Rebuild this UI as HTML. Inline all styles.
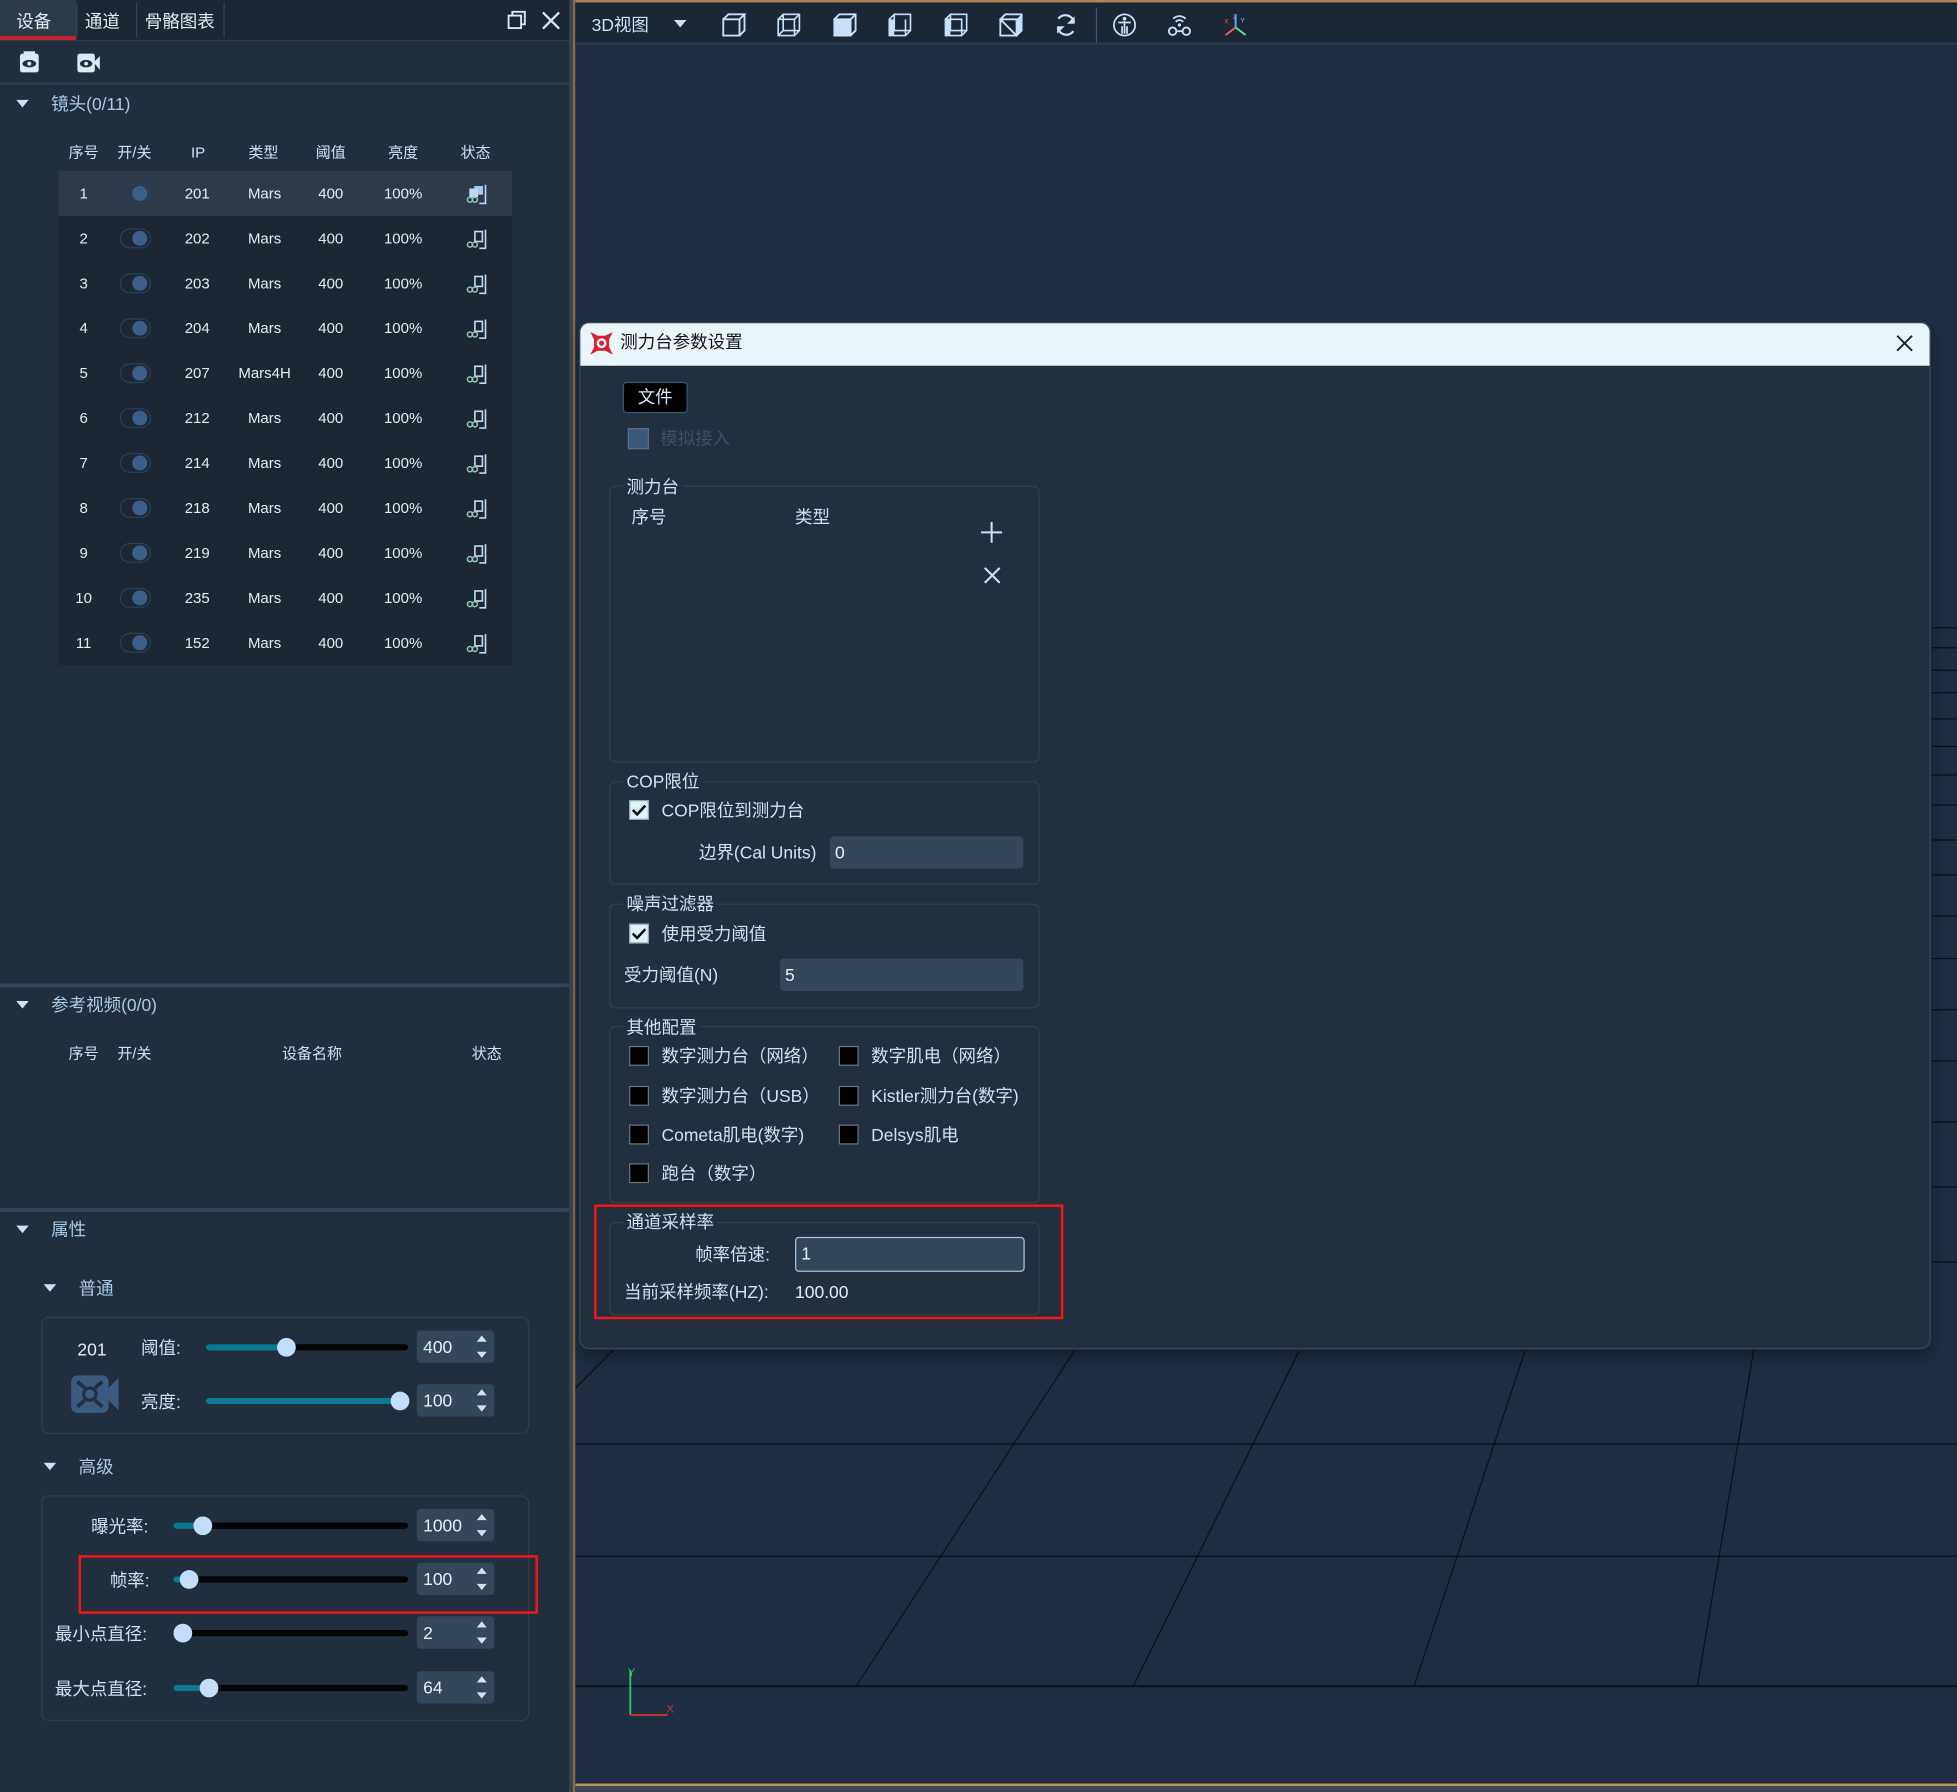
<!DOCTYPE html>
<html><head><meta charset="utf-8">
<style>
*{margin:0;padding:0;box-sizing:border-box}
html,body{width:1957px;height:1792px;overflow:hidden;background:#1e2d3e}
#root{position:absolute;left:0;top:0;width:1568px;height:1436px;transform:scale(1.2481);transform-origin:0 0;font-family:"Liberation Sans","Noto Sans CJK SC",sans-serif;color:#cfe2f4}
.a{position:absolute;white-space:nowrap}
.t12{font-size:12px;line-height:14px}
.t13{font-size:13px;line-height:16px}
.t14{font-size:14px;line-height:18px}
.tri{position:absolute;width:0;height:0;border-left:5px solid transparent;border-right:5px solid transparent;border-top:6px solid #cfe2f4}
.row{position:absolute;left:47px;width:363px;height:36px;background:#1c2733}
.row span{position:absolute;top:11px;font-size:12px;line-height:14px;color:#e4edf6;transform:translateX(-50%)}
.tg{position:absolute;left:49px;top:10px;width:25px;height:16px;border:1px solid #26415c;border-radius:8px}
.tg:after{content:"";position:absolute;right:2px;top:1px;width:12px;height:12px;border-radius:50%;background:#3b5f88}
.st{position:absolute;left:326px;top:10px}
.box{position:absolute;border:1.5px solid #2f3e4e;border-radius:6px}
.trk{position:absolute;height:5px;background:#050505;border-radius:3px}
.fill{position:absolute;left:0;top:0;height:5px;background:#0a7a92;border-radius:3px}
.knob{position:absolute;top:-5px;width:15px;height:15px;border-radius:50%;background:#c3defa}
.spin{position:absolute;width:62px;height:26px;background:#33465a;border-radius:3px;font-size:14px;line-height:26px;padding-left:5px;color:#e8f0f8}
.spin:before{content:"";position:absolute;right:6px;top:4px;border-left:4px solid transparent;border-right:4px solid transparent;border-bottom:5px solid #cfe2f4}
.spin:after{content:"";position:absolute;right:6px;bottom:4px;border-left:4px solid transparent;border-right:4px solid transparent;border-top:5px solid #cfe2f4}
.grp{position:absolute;border:1.5px solid #33404f;border-radius:5px}
.gt{position:absolute;background:#222f3e;padding:0 3px;font-size:14px;line-height:18px;color:#cfe2f4}
.cb{position:absolute;width:16px;height:16px;background:#000;border:1.5px solid #6a7684}
.cbk{position:absolute;width:16px;height:16px;background:#e2f0fc;border:1px solid #8aa}
.inp{position:absolute;background:#33465a;border-radius:3px;font-size:14px;line-height:26px;padding-left:4px;color:#e8f0f8}
.tb{position:absolute;top:10px}
</style></head><body><div id="root">

<!-- LEFT PANEL -->
<div class="a" style="left:0;top:0;width:458px;height:1436px;background:#212e3d"></div>
<div class="a" style="left:0;top:0;width:458px;height:33px;background:#1c2734;border-bottom:1.5px solid #2e3d4d"></div>
<div class="a" style="left:0;top:0;width:61px;height:32px;background:#2d3a4a"></div>
<div class="a" style="left:0;top:29px;width:61px;height:3px;background:#c8232b"></div>
<div class="a" style="left:61px;top:2px;width:1px;height:28px;background:#34445a"></div>
<div class="a" style="left:109px;top:2px;width:1px;height:28px;background:#34445a"></div>
<div class="a" style="left:179px;top:2px;width:1px;height:28px;background:#34445a"></div>
<div class="a t14" style="left:13px;top:8px;color:#e2ecf6">设备</div>
<div class="a t14" style="left:68px;top:8px;color:#e2ecf6">通道</div>
<div class="a t14" style="left:116px;top:8px;color:#e2ecf6">骨骼图表</div>
<svg class="a" style="left:406px;top:8px" width="16" height="16"><rect x="1.5" y="4.5" width="10" height="10" fill="none" stroke="#d8e8f6" stroke-width="1.5"/><path d="M4.5 4.5V1.5H14.5V11.5H11.5" fill="none" stroke="#d8e8f6" stroke-width="1.5"/></svg>
<svg class="a" style="left:434px;top:9px" width="15" height="15"><path d="M1 1L14 14M14 1L1 14" stroke="#d8e8f6" stroke-width="1.8"/></svg>
<div class="a" style="left:0;top:66px;width:458px;height:2px;background:#2e3d4d"></div>
<svg class="a" style="left:15px;top:41px" width="17" height="18"><rect x="1" y="2" width="15" height="15" rx="2" fill="#dbe8f5"/><rect x="4" y="0" width="9" height="3" fill="#dbe8f5"/><ellipse cx="8.5" cy="10" rx="5.5" ry="3" fill="#213040"/><circle cx="8.5" cy="10" r="1.6" fill="#dbe8f5"/></svg>
<svg class="a" style="left:61px;top:41px" width="20" height="18"><rect x="1" y="2" width="14" height="15" rx="2" fill="#dbe8f5"/><path d="M14 9L19 4V15Z" fill="#dbe8f5"/><ellipse cx="8" cy="10" rx="5" ry="3" fill="#213040"/><circle cx="8" cy="10" r="1.5" fill="#dbe8f5"/></svg>

<div class="tri" style="left:13px;top:80px"></div>
<div class="a t14" style="left:41px;top:74px;color:#a9cbe8">镜头(0/11)</div>
<div class="a t12" style="left:55px;top:115px">序号</div>
<div class="a t12" style="left:94px;top:115px">开/关</div>
<div class="a t12" style="left:153px;top:115px">IP</div>
<div class="a t12" style="left:199px;top:115px">类型</div>
<div class="a t12" style="left:253px;top:115px">阈值</div>
<div class="a t12" style="left:311px;top:115px">亮度</div>
<div class="a t12" style="left:369px;top:115px">状态</div>

<div class="row" style="top:137px;background:#2e3a4a"><span style="left:20px">1</span><div class="tg"></div><span style="left:111px">201</span><span style="left:165px">Mars</span><span style="left:218px">400</span><span style="left:276px">100%</span><svg class="st" width="19" height="17"><rect x="7" y="2" width="7" height="7" fill="#a8c8ec"/><rect x="3" y="4" width="7" height="7" fill="#c0d8f4"/><path d="M16 1V16H11" fill="none" stroke="#c0d8f4" stroke-width="1.3"/><circle cx="3.5" cy="13" r="2" fill="none" stroke="#8fc8b8" stroke-width="1.2"/><circle cx="7.5" cy="13" r="2" fill="none" stroke="#8fc8b8" stroke-width="1.2"/></svg></div>
<div class="row" style="top:173px"><span style="left:20px">2</span><div class="tg"></div><span style="left:111px">202</span><span style="left:165px">Mars</span><span style="left:218px">400</span><span style="left:276px">100%</span><svg class="st" width="19" height="17"><rect x="7.5" y="2.5" width="6" height="8" fill="none" stroke="#c0d8f4" stroke-width="1.3"/><path d="M16 1V16H11" fill="none" stroke="#c0d8f4" stroke-width="1.3"/><circle cx="3.5" cy="13" r="2" fill="none" stroke="#8fc8b8" stroke-width="1.2"/><circle cx="7.5" cy="13" r="2" fill="none" stroke="#8fc8b8" stroke-width="1.2"/></svg></div>
<div class="row" style="top:209px"><span style="left:20px">3</span><div class="tg"></div><span style="left:111px">203</span><span style="left:165px">Mars</span><span style="left:218px">400</span><span style="left:276px">100%</span><svg class="st" width="19" height="17"><rect x="7.5" y="2.5" width="6" height="8" fill="none" stroke="#c0d8f4" stroke-width="1.3"/><path d="M16 1V16H11" fill="none" stroke="#c0d8f4" stroke-width="1.3"/><circle cx="3.5" cy="13" r="2" fill="none" stroke="#8fc8b8" stroke-width="1.2"/><circle cx="7.5" cy="13" r="2" fill="none" stroke="#8fc8b8" stroke-width="1.2"/></svg></div>
<div class="row" style="top:245px"><span style="left:20px">4</span><div class="tg"></div><span style="left:111px">204</span><span style="left:165px">Mars</span><span style="left:218px">400</span><span style="left:276px">100%</span><svg class="st" width="19" height="17"><rect x="7.5" y="2.5" width="6" height="8" fill="none" stroke="#c0d8f4" stroke-width="1.3"/><path d="M16 1V16H11" fill="none" stroke="#c0d8f4" stroke-width="1.3"/><circle cx="3.5" cy="13" r="2" fill="none" stroke="#8fc8b8" stroke-width="1.2"/><circle cx="7.5" cy="13" r="2" fill="none" stroke="#8fc8b8" stroke-width="1.2"/></svg></div>
<div class="row" style="top:281px"><span style="left:20px">5</span><div class="tg"></div><span style="left:111px">207</span><span style="left:165px">Mars4H</span><span style="left:218px">400</span><span style="left:276px">100%</span><svg class="st" width="19" height="17"><rect x="7.5" y="2.5" width="6" height="8" fill="none" stroke="#c0d8f4" stroke-width="1.3"/><path d="M16 1V16H11" fill="none" stroke="#c0d8f4" stroke-width="1.3"/><circle cx="3.5" cy="13" r="2" fill="none" stroke="#8fc8b8" stroke-width="1.2"/><circle cx="7.5" cy="13" r="2" fill="none" stroke="#8fc8b8" stroke-width="1.2"/></svg></div>
<div class="row" style="top:317px"><span style="left:20px">6</span><div class="tg"></div><span style="left:111px">212</span><span style="left:165px">Mars</span><span style="left:218px">400</span><span style="left:276px">100%</span><svg class="st" width="19" height="17"><rect x="7.5" y="2.5" width="6" height="8" fill="none" stroke="#c0d8f4" stroke-width="1.3"/><path d="M16 1V16H11" fill="none" stroke="#c0d8f4" stroke-width="1.3"/><circle cx="3.5" cy="13" r="2" fill="none" stroke="#8fc8b8" stroke-width="1.2"/><circle cx="7.5" cy="13" r="2" fill="none" stroke="#8fc8b8" stroke-width="1.2"/></svg></div>
<div class="row" style="top:353px"><span style="left:20px">7</span><div class="tg"></div><span style="left:111px">214</span><span style="left:165px">Mars</span><span style="left:218px">400</span><span style="left:276px">100%</span><svg class="st" width="19" height="17"><rect x="7.5" y="2.5" width="6" height="8" fill="none" stroke="#c0d8f4" stroke-width="1.3"/><path d="M16 1V16H11" fill="none" stroke="#c0d8f4" stroke-width="1.3"/><circle cx="3.5" cy="13" r="2" fill="none" stroke="#8fc8b8" stroke-width="1.2"/><circle cx="7.5" cy="13" r="2" fill="none" stroke="#8fc8b8" stroke-width="1.2"/></svg></div>
<div class="row" style="top:389px"><span style="left:20px">8</span><div class="tg"></div><span style="left:111px">218</span><span style="left:165px">Mars</span><span style="left:218px">400</span><span style="left:276px">100%</span><svg class="st" width="19" height="17"><rect x="7.5" y="2.5" width="6" height="8" fill="none" stroke="#c0d8f4" stroke-width="1.3"/><path d="M16 1V16H11" fill="none" stroke="#c0d8f4" stroke-width="1.3"/><circle cx="3.5" cy="13" r="2" fill="none" stroke="#8fc8b8" stroke-width="1.2"/><circle cx="7.5" cy="13" r="2" fill="none" stroke="#8fc8b8" stroke-width="1.2"/></svg></div>
<div class="row" style="top:425px"><span style="left:20px">9</span><div class="tg"></div><span style="left:111px">219</span><span style="left:165px">Mars</span><span style="left:218px">400</span><span style="left:276px">100%</span><svg class="st" width="19" height="17"><rect x="7.5" y="2.5" width="6" height="8" fill="none" stroke="#c0d8f4" stroke-width="1.3"/><path d="M16 1V16H11" fill="none" stroke="#c0d8f4" stroke-width="1.3"/><circle cx="3.5" cy="13" r="2" fill="none" stroke="#8fc8b8" stroke-width="1.2"/><circle cx="7.5" cy="13" r="2" fill="none" stroke="#8fc8b8" stroke-width="1.2"/></svg></div>
<div class="row" style="top:461px"><span style="left:20px">10</span><div class="tg"></div><span style="left:111px">235</span><span style="left:165px">Mars</span><span style="left:218px">400</span><span style="left:276px">100%</span><svg class="st" width="19" height="17"><rect x="7.5" y="2.5" width="6" height="8" fill="none" stroke="#c0d8f4" stroke-width="1.3"/><path d="M16 1V16H11" fill="none" stroke="#c0d8f4" stroke-width="1.3"/><circle cx="3.5" cy="13" r="2" fill="none" stroke="#8fc8b8" stroke-width="1.2"/><circle cx="7.5" cy="13" r="2" fill="none" stroke="#8fc8b8" stroke-width="1.2"/></svg></div>
<div class="row" style="top:497px"><span style="left:20px">11</span><div class="tg"></div><span style="left:111px">152</span><span style="left:165px">Mars</span><span style="left:218px">400</span><span style="left:276px">100%</span><svg class="st" width="19" height="17"><rect x="7.5" y="2.5" width="6" height="8" fill="none" stroke="#c0d8f4" stroke-width="1.3"/><path d="M16 1V16H11" fill="none" stroke="#c0d8f4" stroke-width="1.3"/><circle cx="3.5" cy="13" r="2" fill="none" stroke="#8fc8b8" stroke-width="1.2"/><circle cx="7.5" cy="13" r="2" fill="none" stroke="#8fc8b8" stroke-width="1.2"/></svg></div>

<div class="a" style="left:0;top:788px;width:458px;height:3px;background:#34465a"></div>
<div class="tri" style="left:13px;top:802px"></div>
<div class="a t14" style="left:41px;top:796px;color:#a9cbe8">参考视频(0/0)</div>
<div class="a t12" style="left:55px;top:837px">序号</div>
<div class="a t12" style="left:94px;top:837px">开/关</div>
<div class="a t12" style="left:226px;top:837px">设备名称</div>
<div class="a t12" style="left:378px;top:837px">状态</div>

<div class="a" style="left:0;top:968px;width:458px;height:3px;background:#34465a"></div>
<div class="tri" style="left:13px;top:982px"></div>
<div class="a t14" style="left:41px;top:976px;color:#a9cbe8">属性</div>
<div class="tri" style="left:35px;top:1029px"></div>
<div class="a t14" style="left:63px;top:1023px;color:#a9cbe8">普通</div>
<div class="box" style="left:33px;top:1055px;width:391px;height:94px"></div>
<div class="a t14" style="left:62px;top:1072px;color:#e4edf6">201</div>
<svg class="a" style="left:56px;top:1100px" width="40" height="34"><rect x="1" y="2" width="30" height="30" rx="5" fill="#3b5c80"/><path d="M31 12L39 4V30L31 22Z" fill="#3b5c80"/><path d="M6 7L12 12M26 7L20 12M6 27L12 22M26 27L20 22" stroke="#213040" stroke-width="3"/><circle cx="16" cy="17" r="5" fill="none" stroke="#213040" stroke-width="2.5"/></svg>
<div class="a t14" style="left:113px;top:1071px">阈值:</div>
<div class="trk" style="left:165px;top:1077px;width:162px"><div class="fill" style="width:64px"></div><div class="knob" style="left:57px"></div></div>
<div class="spin" style="left:334px;top:1066px">400</div>
<div class="a t14" style="left:113px;top:1114px">亮度:</div>
<div class="trk" style="left:165px;top:1120px;width:162px"><div class="fill" style="width:158px"></div><div class="knob" style="left:148px"></div></div>
<div class="spin" style="left:334px;top:1109px">100</div>

<div class="tri" style="left:35px;top:1172px"></div>
<div class="a t14" style="left:63px;top:1166px;color:#a9cbe8">高级</div>
<div class="box" style="left:33px;top:1198px;width:391px;height:181px"></div>
<div class="a t14" style="left:73px;top:1214px">曝光率:</div>
<div class="trk" style="left:139px;top:1220px;width:188px"><div class="fill" style="width:24px"></div><div class="knob" style="left:16px"></div></div>
<div class="spin" style="left:334px;top:1209px">1000</div>
<div class="a t14" style="left:88px;top:1257px">帧率:</div>
<div class="trk" style="left:139px;top:1263px;width:188px"><div class="fill" style="width:12px"></div><div class="knob" style="left:5px"></div></div>
<div class="spin" style="left:334px;top:1252px">100</div>
<div class="a" style="left:63px;top:1246px;width:368px;height:47px;border:2.5px solid #f0161a"></div>
<div class="a t14" style="left:44px;top:1300px">最小点直径:</div>
<div class="trk" style="left:139px;top:1306px;width:188px"><div class="knob" style="left:0px"></div></div>
<div class="spin" style="left:334px;top:1295px">2</div>
<div class="a t14" style="left:44px;top:1344px">最大点直径:</div>
<div class="trk" style="left:139px;top:1350px;width:188px"><div class="fill" style="width:30px"></div><div class="knob" style="left:21px"></div></div>
<div class="spin" style="left:334px;top:1339px">64</div>

<div class="a" style="left:456px;top:0;width:3px;height:1436px;background:#394655"></div>
<div class="a" style="left:459px;top:0;width:2px;height:1436px;background:#8c6a48"></div>

<!-- VIEWPORT -->
<div class="a" style="left:461px;top:0;width:1107px;height:1436px;background:#1e2f44"></div>
<div class="a" style="left:461px;top:0;width:1107px;height:2px;background:#b08458"></div>
<div class="a" style="left:461px;top:1429px;width:1107px;height:2px;background:#c0905c"></div>
<div class="a" style="left:461px;top:1431px;width:1107px;height:5px;background:#3a4656"></div>
<div class="a" style="left:461px;top:2px;width:1107px;height:34px;background:#1b2735;border-bottom:2px solid #2a3a4c"></div>
<div class="a t14" style="left:474px;top:11px;color:#cfe2f4">3D视图</div>
<div class="tri" style="left:540px;top:16px"></div>
<svg class="tb" style="left:578px" width="20" height="20"><path d="M1.5 5.5H14.5V18.5H1.5Z M1.5 5.5L5.5 1.5H18.5L14.5 5.5 M18.5 1.5V14.5L14.5 18.5" fill="none" stroke="#c8e0f8" stroke-width="1.5"/></svg>
<svg class="tb" style="left:622px" width="20" height="20"><path d="M1.5 5.5H14.5V18.5H1.5Z M1.5 5.5L5.5 1.5H18.5V14.5L14.5 18.5 M14.5 5.5L18.5 1.5 M5.5 1.5V14.5H18.5 M5.5 14.5L1.5 18.5" fill="none" stroke="#c8e0f8" stroke-width="1.3"/></svg>
<svg class="tb" style="left:667px" width="20" height="20"><path d="M1.5 5.5H14.5V18.5H1.5Z" fill="#c8e0f8" stroke="#c8e0f8" stroke-width="1.5"/><path d="M1.5 5.5L5.5 1.5H18.5V14.5L14.5 18.5 M14.5 5.5L18.5 1.5" fill="none" stroke="#c8e0f8" stroke-width="1.5"/></svg>
<svg class="tb" style="left:711px" width="20" height="20"><path d="M1.5 5.5L5.5 1.5H18.5V14.5L14.5 18.5H1.5Z M5.5 1.5V14.5H18.5 M14.5 5.5V18.5" fill="none" stroke="#c8e0f8" stroke-width="1.3"/><rect x="1.5" y="5.5" width="4" height="13" fill="#c8e0f8"/></svg>
<svg class="tb" style="left:756px" width="20" height="20"><path d="M1.5 5.5H14.5V18.5H1.5Z M1.5 5.5L5.5 1.5H18.5V14.5L14.5 18.5 M5.5 1.5V14.5H18.5" fill="none" stroke="#c8e0f8" stroke-width="1.3"/><rect x="1.5" y="5.5" width="4" height="13" fill="#c8e0f8"/></svg>
<svg class="tb" style="left:800px" width="20" height="20"><path d="M1.5 5.5H14.5V18.5H1.5Z M1.5 5.5L5.5 1.5H18.5V14.5L14.5 18.5Z" fill="none" stroke="#c8e0f8" stroke-width="1.5"/><path d="M14.5 5.5L18.5 1.5V14.5L14.5 18.5Z" fill="#c8e0f8"/></svg>
<svg class="tb" style="left:844px" width="20" height="20"><path d="M16.5 8A7 7 0 0 0 4 5M3.5 12A7 7 0 0 0 16 15" fill="none" stroke="#c8e0f8" stroke-width="1.8"/><path d="M17 3V9H11Z M3 17V11H9Z" fill="#c8e0f8"/></svg>
<div class="a" style="left:878px;top:6px;width:1px;height:28px;background:#3d5674"></div>
<svg class="tb" style="left:891px" width="20" height="20"><circle cx="10" cy="10" r="8.5" fill="none" stroke="#c8e0f8" stroke-width="1.4"/><circle cx="10" cy="5" r="1.5" fill="#c8e0f8"/><path d="M5 8H15M10 7V17M8 11V17M12 11V17" stroke="#c8e0f8" stroke-width="1.4"/></svg>
<svg class="tb" style="left:935px" width="20" height="20"><path d="M5 5A7 7 0 0 1 15 5M7 7.5A4 4 0 0 1 13 7.5" fill="none" stroke="#c8e0f8" stroke-width="1.4"/><circle cx="10" cy="10" r="1.3" fill="#c8e0f8"/><circle cx="4.5" cy="15" r="3" fill="none" stroke="#c8e0f8" stroke-width="1.5"/><circle cx="15.5" cy="15" r="3" fill="none" stroke="#c8e0f8" stroke-width="1.5"/><path d="M7.5 15H12.5" stroke="#c8e0f8" stroke-width="1.5"/></svg>
<svg class="tb" style="left:979px" width="22" height="20"><path d="M11 2V12" stroke="#6aa8ff" stroke-width="1.5"/><path d="M11 12L3 18" stroke="#ff6060" stroke-width="1.5"/><path d="M11 12L19 18" stroke="#60e090" stroke-width="1.5"/><text x="9" y="5" font-size="5" fill="#6aa8ff" font-family="Liberation Sans">Z</text><text x="2" y="9" font-size="5" fill="#ff6060" font-family="Liberation Sans">X</text><text x="15" y="8" font-size="5" fill="#60e0ff" font-family="Liberation Sans">Y</text></svg>

<svg class="a" style="left:461px;top:0" width="1107" height="1436">
<g stroke="#0a1118" stroke-width="1">
<line x1="1087" y1="503" x2="1107" y2="503"/><line x1="1087" y1="519" x2="1107" y2="519"/><line x1="1087" y1="537" x2="1107" y2="537"/><line x1="1087" y1="555" x2="1107" y2="555"/><line x1="1087" y1="576" x2="1107" y2="576"/><line x1="1087" y1="598" x2="1107" y2="598"/><line x1="1087" y1="621" x2="1107" y2="621"/><line x1="1087" y1="645" x2="1107" y2="645"/><line x1="1087" y1="673" x2="1107" y2="673"/><line x1="1087" y1="701" x2="1107" y2="701"/><line x1="1087" y1="734" x2="1107" y2="734"/><line x1="1087" y1="768" x2="1107" y2="768"/><line x1="1087" y1="809" x2="1107" y2="809"/><line x1="1087" y1="850" x2="1107" y2="850"/><line x1="1087" y1="899" x2="1107" y2="899"/><line x1="1087" y1="951" x2="1107" y2="951"/><line x1="1087" y1="1011" x2="1107" y2="1011"/>
<line x1="0" y1="1157" x2="1107" y2="1157"/><line x1="0" y1="1247" x2="1107" y2="1247"/><line x1="0" y1="1351" x2="1107" y2="1351" stroke-width="1.5"/>
<line x1="30" y1="1082" x2="0" y2="1112"/>
<line x1="400" y1="1082" x2="225" y2="1351"/>
<line x1="580" y1="1082" x2="447" y2="1351"/>
<line x1="761" y1="1082" x2="672" y2="1351"/>
<line x1="944" y1="1082" x2="899" y2="1351"/>
</g>
<line x1="44" y1="1338" x2="44" y2="1374" stroke="#30c060" stroke-width="1.5"/>
<line x1="44" y1="1374" x2="74" y2="1374" stroke="#d03030" stroke-width="1.5"/>
<text x="42" y="1343" font-size="9" fill="#30c060" font-family="Liberation Sans">Y</text>
<text x="73" y="1372" font-size="9" fill="#d03030" font-family="Liberation Sans">X</text>
</svg>

<!-- DIALOG -->
<div class="a" style="left:464px;top:258px;width:1083px;height:823px;background:#222f3e;border:1.5px solid #3c4856;border-radius:8px;box-shadow:0 6px 14px rgba(0,0,0,.35)"></div>
<div class="a" style="left:465px;top:259px;width:1081px;height:34px;background:#e8f5fb;border-radius:7px 7px 0 0"></div>
<svg class="a" style="left:472px;top:265px" width="20" height="20"><path d="M1 1L7 4H13L19 1L16 7V13L19 19L13 16H7L1 19L4 13V7Z" fill="#d8202a"/><circle cx="10" cy="10" r="4" fill="#e8f5fb"/><circle cx="10" cy="10" r="2" fill="#d8202a"/></svg>
<div class="a t14" style="left:497px;top:265px;color:#111">测力台参数设置</div>
<svg class="a" style="left:1519px;top:268px" width="14" height="14"><path d="M1 1L13 13M13 1L1 13" stroke="#222" stroke-width="1.5"/></svg>

<div class="a" style="left:499px;top:306px;width:52px;height:25px;background:#000;border:1px solid #3d5574;border-radius:3px;font-size:14px;line-height:23px;text-align:center;color:#d8eafa">文件</div>
<div class="a" style="left:503px;top:343px;width:17px;height:17px;background:#3b5878;border:1px solid #50708e"></div>
<div class="a t14" style="left:529px;top:342px;color:#3a526c">模拟接入</div>

<div class="grp" style="left:488px;top:389px;width:345px;height:222px"></div>
<div class="gt" style="left:499px;top:381px">测力台</div>
<div class="a t14" style="left:506px;top:405px">序号</div>
<div class="a t14" style="left:637px;top:405px">类型</div>
<svg class="a" style="left:786px;top:418px" width="17" height="17"><path d="M8.5 0V17M0 8.5H17" stroke="#d0e4f6" stroke-width="1.6"/></svg>
<svg class="a" style="left:788px;top:454px" width="14" height="14"><path d="M1 1L13 13M13 1L1 13" stroke="#d0e4f6" stroke-width="1.6"/></svg>

<div class="grp" style="left:488px;top:626px;width:345px;height:83px"></div>
<div class="gt" style="left:499px;top:617px">COP限位</div>
<div class="cbk" style="left:504px;top:641px"></div>
<svg class="a" style="left:506px;top:644px" width="12" height="10"><path d="M1 5L4.5 8.5L11 1.5" fill="none" stroke="#000" stroke-width="2"/></svg>
<div class="a t14" style="left:530px;top:640px">COP限位到测力台</div>
<div class="a t14" style="left:560px;top:674px">边界(Cal Units)</div>
<div class="inp" style="left:665px;top:670px;width:155px;height:26px">0</div>

<div class="grp" style="left:488px;top:724px;width:345px;height:84px"></div>
<div class="gt" style="left:499px;top:715px">噪声过滤器</div>
<div class="cbk" style="left:504px;top:740px"></div>
<svg class="a" style="left:506px;top:743px" width="12" height="10"><path d="M1 5L4.5 8.5L11 1.5" fill="none" stroke="#000" stroke-width="2"/></svg>
<div class="a t14" style="left:530px;top:739px">使用受力阈值</div>
<div class="a t14" style="left:500px;top:772px">受力阈值(N)</div>
<div class="inp" style="left:625px;top:768px;width:195px;height:26px">5</div>

<div class="grp" style="left:488px;top:822px;width:345px;height:142px"></div>
<div class="gt" style="left:499px;top:814px">其他配置</div>
<div class="cb" style="left:504px;top:838px"></div><div class="a t14" style="left:530px;top:837px">数字测力台（网络）</div>
<div class="cb" style="left:672px;top:838px"></div><div class="a t14" style="left:698px;top:837px">数字肌电（网络）</div>
<div class="cb" style="left:504px;top:870px"></div><div class="a t14" style="left:530px;top:869px">数字测力台（USB）</div>
<div class="cb" style="left:672px;top:870px"></div><div class="a t14" style="left:698px;top:869px">Kistler测力台(数字)</div>
<div class="cb" style="left:504px;top:901px"></div><div class="a t14" style="left:530px;top:900px">Cometa肌电(数字)</div>
<div class="cb" style="left:672px;top:901px"></div><div class="a t14" style="left:698px;top:900px">Delsys肌电</div>
<div class="cb" style="left:504px;top:932px"></div><div class="a t14" style="left:530px;top:931px">跑台（数字）</div>

<div class="grp" style="left:488px;top:979px;width:345px;height:75px"></div>
<div class="gt" style="left:499px;top:970px">通道采样率</div>
<div class="a t14" style="left:557px;top:996px">帧率倍速:</div>
<div class="inp" style="left:637px;top:991px;width:184px;height:28px;border:1.5px solid #a8c4e0;line-height:25px">1</div>
<div class="a t14" style="left:500px;top:1026px">当前采样频率(HZ):</div>
<div class="a t14" style="left:637px;top:1026px;color:#e4edf6">100.00</div>
<div class="a" style="left:476px;top:965px;width:376px;height:92px;border:2.5px solid #f0161a"></div>

</div></body></html>
